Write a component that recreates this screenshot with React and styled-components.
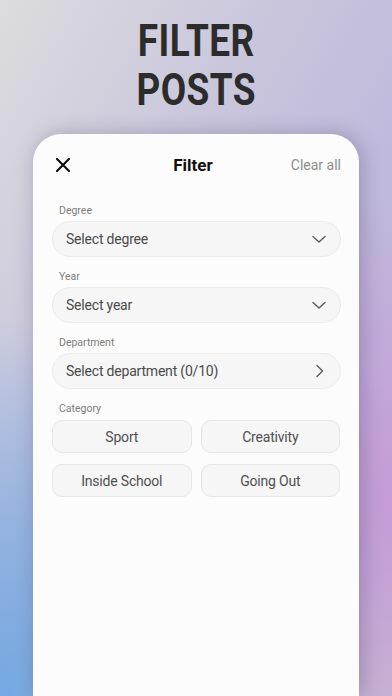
import React from "react";
import styled, { createGlobalStyle } from "styled-components";

const Global = createGlobalStyle`
    html, body {
        margin: 0;
        padding: 0;
    }
    body {
        font-family: Roboto, "Liberation Sans", sans-serif;
    }
`;

const Screen = styled.div`
    width: 392px;
    height: 696px;
    overflow: hidden;
    display: flex;
    flex-direction: column;
    align-items: center;
    background:
        radial-gradient(ellipse 260px 380px at 0% 100%, #73a8e2 0%, rgba(115, 168, 226, 0.6) 45%, rgba(115, 168, 226, 0) 100%),
        radial-gradient(ellipse 220px 300px at 100% 72%, #c49bd6 0%, rgba(196, 155, 214, 0.5) 50%, rgba(196, 155, 214, 0) 100%),
        radial-gradient(ellipse 300px 260px at 100% 100%, #c8bcd0 0%, rgba(200, 188, 208, 0) 100%),
        linear-gradient(120deg, #dcdcde 0%, #c9c6dc 35%, #bfbadc 60%, #c0b3d8 100%);
`;

const Title = styled.h1`
    margin: 17px 0 0;
    font: normal normal 700 44px/49px Roboto, "Liberation Sans", sans-serif;
    color: #2c2c2c;
    text-align: center;
    letter-spacing: 0.5px;
    transform: scaleX(0.84);
`;

const Card = styled.div`
    margin-top: 19px;
    width: 326px;
    flex: 1;
    box-sizing: border-box;
    background: #fcfcfc;
    border-radius: 28px 28px 0 0;
    box-shadow: 3px 0 20px rgba(60, 50, 90, 0.3);
    padding: 19px 18px 0 19px;
`;

const Header = styled.div`
    display: flex;
    align-items: center;
    justify-content: space-between;
    height: 24px;
    padding: 0 0 0 3px;
    margin-bottom: 27px;
`;

const CloseBtn = styled.button`
    border: 0;
    background: none;
    padding: 0;
    width: 16px;
    height: 16px;
    display: flex;
    align-items: center;
    justify-content: center;
`;

const HeaderTitle = styled.div`
    font: normal normal 700 17px/24px Roboto, sans-serif;
    color: #111;
    margin-left: 24px;
`;

const ClearAll = styled.div`
    font: normal normal 400 14px/24px Roboto, sans-serif;
    color: #8d8d8d;
`;

const Section = styled.div`
    margin-bottom: 13px;
`;

const Label = styled.div`
    font: normal normal 400 10.5px/14px Roboto, sans-serif;
    color: #7c7c7c;
    padding-left: 7px;
    margin-bottom: 3px;
`;

const Select = styled.div`
    height: 36px;
    box-sizing: border-box;
    border: 1px solid #ebebeb;
    border-radius: 18px;
    background: #f6f6f6;
    display: flex;
    align-items: center;
    justify-content: space-between;
    padding: 0 13px 0 13px;
    font: normal normal 400 14px/20px Roboto, sans-serif;
    letter-spacing: -0.2px;
    color: #4a4a4a;
`;

const Grid = styled.div`
    display: grid;
    grid-template-columns: 1fr 1fr;
    column-gap: 9px;
    row-gap: 11px;
    padding-right: 1px;
    margin-top: 4px;
`;

const Chip = styled.div`
    height: 33px;
    box-sizing: border-box;
    border: 1px solid #e6e6e6;
    border-radius: 10px;
    background: #f6f6f6;
    display: flex;
    align-items: center;
    justify-content: center;
    font: normal normal 400 14px/20px Roboto, sans-serif;
    letter-spacing: -0.2px;
    color: #505050;
`;

const Chevron = ({ dir }) => (
    <svg width="16" height="16" viewBox="0 0 16 16" fill="none">
        {dir === "right" ? (
            <path d="M6 2.5 L11.5 8 L6 13.5" stroke="#5a5a5a" strokeWidth="1.4" strokeLinecap="round" strokeLinejoin="round" />
        ) : (
            <path d="M2 5.5 L8 11 L14 5.5" stroke="#5a5a5a" strokeWidth="1.4" strokeLinecap="round" strokeLinejoin="round" />
        )}
    </svg>
);

const fields = [
    { label: "Degree", value: "Select degree", dir: "down" },
    { label: "Year", value: "Select year", dir: "down" },
    { label: "Department", value: "Select department (0/10)", dir: "right" },
];

const categories = ["Sport", "Creativity", "Inside School", "Going Out"];

const App = () => {
    return (
        <Screen>
            <Global />
            <Title>
                FILTER
                <br />
                POSTS
            </Title>
            <Card>
                <Header>
                    <CloseBtn>
                        <svg width="14" height="14" viewBox="0 0 14 14">
                            <path d="M1 1 L13 13 M13 1 L1 13" stroke="#111" strokeWidth="2.2" strokeLinecap="square" />
                        </svg>
                    </CloseBtn>
                    <HeaderTitle>Filter</HeaderTitle>
                    <ClearAll>Clear all</ClearAll>
                </Header>
                {fields.map((f) => (
                    <Section key={f.label}>
                        <Label>{f.label}</Label>
                        <Select>
                            {f.value}
                            <Chevron dir={f.dir} />
                        </Select>
                    </Section>
                ))}
                <Section>
                    <Label>Category</Label>
                    <Grid>
                        {categories.map((c) => (
                            <Chip key={c}>{c}</Chip>
                        ))}
                    </Grid>
                </Section>
            </Card>
        </Screen>
    );
};

export default App;
